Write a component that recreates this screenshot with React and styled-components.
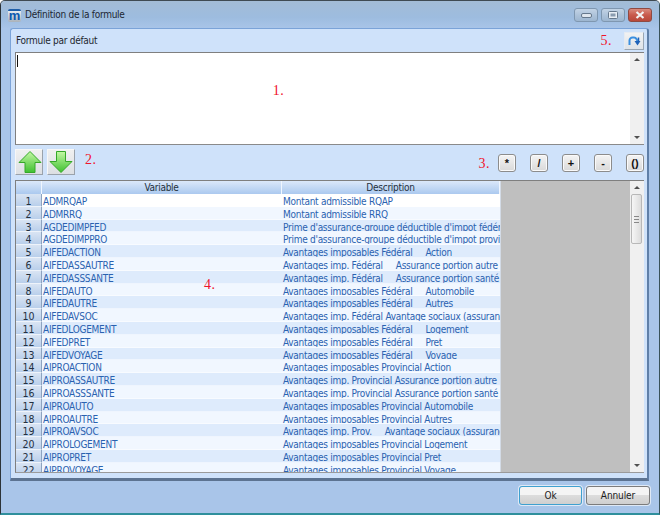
import React from "react";
import styled, { createGlobalStyle } from "styled-components";

const sans = `"DejaVu Sans Condensed", "DejaVu Sans", sans-serif`;

const Global = createGlobalStyle`
  html, body { margin: 0; padding: 0; width: 660px; height: 515px; overflow: hidden; }
  body { font-family: ${sans}; font-size: 10px; letter-spacing: -0.27px; }
`;

const Window = styled.div`
  width: 660px; height: 515px; box-sizing: border-box; display: flex; flex-direction: column;
  background: #a9c5e9; border: 1px solid #3f4a52; border-left-color: #2c3338; border-bottom: 2px solid #2f8f9c; border-right-color:#39525a;
  border-radius: 5px 5px 0 0; overflow: hidden;
`;
const TitleBar = styled.div`
  height: 27px; flex: none; display: flex; align-items: flex-start; padding: 7px 0 0 7px; box-sizing: border-box;
  background: linear-gradient(#a3bcd6, #9dbcdf 60%, #a8c4e8); gap: 4px; color: #1c2733;
`;
const Logo = styled.div`
  width: 13px; height: 13px; margin-top: 1px; border-radius: 2px; display: flex; align-items: center; justify-content: center;
  color: #0a58b0; font: bold 13px/12px "Liberation Sans", sans-serif; letter-spacing: 0; background: linear-gradient(#1f5fa8 0 2px, #e4eaf0 2px, #aab2ba);
`;
const TitleText = styled.div` font-size: 10px; line-height: 14px; flex: 1; `;
const Controls = styled.div` display: flex; gap: 3px; margin: 0 7px 0 0; `;
const Ctl = styled.div`
  width: 24px; height: 14px; box-sizing: border-box; border: 1px solid ${p => p.$red ? "#8f4a42" : "#7f97b0"}; border-radius: 3px; display: flex; align-items: center; justify-content: center;
  background: ${p => p.$red ? "linear-gradient(#d98b7e, #c85a4c 50%, #b8483a)" : "linear-gradient(#c2d3e5, #aec3da 50%, #9db6d0)"};
`;
const Frame = styled.div`
  flex: none; margin: 0 10px 0 9px; height: 453px; box-sizing: border-box; background: #cfe2fa;
  border: 1px solid #7ba3d8; border-right: 2px solid #5f7fa8; border-bottom: 3px solid #5c7391; border-radius: 3px 3px 0 0;
  padding: 3px 3px 0 4px; display: flex; flex-direction: column;
`;
const TopRow = styled.div` display: flex; align-items: flex-start; height: 19px; flex: none; `;
const Caption = styled.div` flex: 1; padding: 2px 0 0 1px; color: #1e2730; font-size: 10px; line-height: 14px; `;
const Mark = styled.span` font: 14px/14px "Liberation Serif", serif; color: #f0142c; letter-spacing: .5px; `;
const Mark5 = styled(Mark)` margin-top: 2px; `;
const RefreshBtn = styled.button`
  width: 20px; height: 18px; margin-left: 12px; padding: 0; border: 1px solid #e6ebf2; border-bottom-color:#9aa6b3; border-right-color:#9aa6b3; background: linear-gradient(#f2f2f2, #dfe3e8);
  display: flex; align-items: center; justify-content: center;
`;
const EditorBox = styled.div`
  flex: none; margin-top: 1px; height: 93px; box-sizing: border-box; display: flex; border: 1px solid #7f7f7f; border-right: none; border-bottom-color: #8a8a8a; background: #fff;
`;
const Editor = styled.div` flex: 1; position: relative; display: flex; align-items: center; justify-content: center; padding: 0 89px 15px 0; `;
const Caret = styled.div` position: absolute; left: 1px; top: 2px; width: 1px; height: 12px; background: #111; `;
const Scroll = styled.div`
  width: 14px; flex: none; background: #f0f0f0; display: flex; flex-direction: column; align-items: center; justify-content: space-between; box-sizing: border-box; padding: 5px 0;
`;
const ArrowTip = styled.div`
  width: 0; height: 0; border-left: 3px solid transparent; border-right: 3px solid transparent;
  ${p => p.$down ? "border-top: 3px solid #505050;" : "border-bottom: 3px solid #505050;"}
`;
const ToolRow = styled.div` flex: none; height: 35px; display: flex; align-items: flex-start; `;
const ArrowBtn = styled.button`
  width: 28px; height: 26px; padding: 0; margin: 4px 4px 0 0; background: linear-gradient(#f0f0f0, #dcdfe3); border: 1px solid #f7f7f7; border-right-color: #9aa2ab; border-bottom-color: #9aa2ab;
  display: flex; align-items: center; justify-content: center;
`;
const Mark2 = styled(Mark)` margin: 8px 0 0 6px; flex: 1; `;
const Mark3 = styled(Mark)` margin: 12px 8px 0 0; `;
const Ops = styled.div` display: flex; gap: 14px; margin-top: 9px; `;
const Op = styled.button`
  width: 18px; height: 18px; padding: 0; border: 1px solid #8c8c8c; border-radius: 3px; background: linear-gradient(#f4f4f4, #d9d9d9);
  font: bold 11px/14px "Liberation Sans", sans-serif; color: #111; box-shadow: inset 0 0 0 1px #fafafa;
`;
const Grid = styled.div`
  flex: none; height: 293px; box-sizing: border-box; position: relative; display: flex; background: #bfbfbf; border: 1px solid #7f7f7f; border-right: none; border-bottom: 1px solid #9a9a9a;
`;
const Mark4 = styled(Mark)` position: absolute; left: 188px; top: 97px; `;
const TableArea = styled.div` flex: none; width: 484px; overflow: hidden; `;
const Filler = styled.div` flex: 1; background: #bfbfbf; border-left: 1px solid #d3dbe6; `;
const GridScroll = styled(Scroll)` position: relative; `;
const Thumb = styled.div`
  position: absolute; left: 1px; top: 13px; width: 11px; height: 50px; box-sizing: border-box; border: 1px solid #b8b8b8; border-radius: 2px; background: linear-gradient(90deg, #f6f6f6, #dcdcdc);
  display: flex; align-items: center; justify-content: center;
`;
const Grip = styled.div` width: 5px; height: 5px; border-top: 1px solid #888; border-bottom: 1px solid #888; position: relative; &::after { content: ""; position: absolute; left: 0; right: 0; top: 2px; height: 1px; background: #888; } `;
const Head = styled.div`
  display: grid; grid-template-columns: 26px 240px 218px; height: 13px; background: linear-gradient(#dbe8fa, #abc9ef);
`;
const HeadCell = styled.div`
  text-align: center; font-size: 10px; line-height: 13px; color: #243040; border-right: 1px solid #f0f6ff; overflow: hidden;
`;
const Row = styled.div`
  display: grid; grid-template-columns: 26px 240px 218px; height: 12.8px; background: ${p => p.$bg};
`;
const Num = styled.div`
  text-align: center; background: linear-gradient(#d9e4f3, #b9cfeb); border-right: 1px solid #8da3c0; border-bottom: 1px solid #eef3fa; box-sizing: border-box; color: #24303f; line-height: 15.4px; font-size: 10.5px; letter-spacing: 0; overflow: hidden;
`;
const Cell = styled.div`
  white-space: pre; overflow: hidden; padding-left: 1px; color: #2a62b0; line-height: 15.6px; font-size: 10px;
  border-bottom: 1px solid rgba(255,255,255,.5); box-sizing: border-box;
`;
const Footer = styled.div` flex: 1; display: flex; justify-content: flex-end; gap: 4px; padding: 5px 9px 0 0; `;
const FootBtn = styled.button`
  width: ${p => p.$w}px; height: 19px; padding: 0; border-radius: 3px; background: linear-gradient(#f4f4f4 45%, #dcdcdc 50%, #cfcfcf);
  border: 1px solid ${p => p.$def ? "#3fa0cf" : "#7c7c7c"}; box-shadow: 0 0 0 1px #dfe9f6; color: #1c1c1c;
  font: 10px ${sans}; letter-spacing: -0.1px;
`;

const rows = [
  ["ADMRQAP", "Montant admissible RQAP"],
  ["ADMRRQ", "Montant admissible RRQ"],
  ["AGDEDIMPFED", "Prime d'assurance-groupe déductible d'impot fédéral"],
  ["AGDEDIMPPRO", "Prime d'assurance-groupe déductible d'impot provincial"],
  ["AIFEDACTION", "Avantages imposables Fédéral     Action"],
  ["AIFEDASSAUTRE", "Avantages imp. Fédéral     Assurance portion autre"],
  ["AIFEDASSSANTE", "Avantages imp. Fédéral     Assurance portion santé"],
  ["AIFEDAUTO", "Avantages imposables Fédéral     Automobile"],
  ["AIFEDAUTRE", "Avantages imposables Fédéral     Autres"],
  ["AIFEDAVSOC", "Avantages imp. Fédéral Avantage sociaux (assurance)"],
  ["AIFEDLOGEMENT", "Avantages imposables Fédéral     Logement"],
  ["AIFEDPRET", "Avantages imposables Fédéral     Pret"],
  ["AIFEDVOYAGE", "Avantages imposables Fédéral     Voyage"],
  ["AIPROACTION", "Avantages imposables Provincial Action"],
  ["AIPROASSAUTRE", "Avantages imp. Provincial Assurance portion autre"],
  ["AIPROASSSANTE", "Avantages imp. Provincial Assurance portion santé"],
  ["AIPROAUTO", "Avantages imposables Provincial Automobile"],
  ["AIPROAUTRE", "Avantages imposables Provincial Autres"],
  ["AIPROAVSOC", "Avantages imp. Prov.     Avantage sociaux (assurance)"],
  ["AIPROLOGEMENT", "Avantages imposables Provincial Logement"],
  ["AIPROPRET", "Avantages imposables Provincial Pret"],
  ["AIPROVOYAGE", "Avantages imposables Provincial Voyage"],
];

const rowBg = i => (i === 0 ? "#ffffff" : i % 2 === 1 ? "#f1f7ff" : "#deebfc");

const GreenArrow = ({ down }) => (
  <svg width="26" height="24" viewBox="0 0 26 24">
    <defs>
      <linearGradient id={down ? "gd" : "gu"} x1="0" y1="0" x2="0" y2="1">
        <stop offset="0" stopColor="#c4f8a4" />
        <stop offset="1" stopColor="#3fc030" />
      </linearGradient>
    </defs>
    <path
      d={down ? "M8.5 1.5h9v10h6.5L13 22.5 2 11.5h6.5z" : "M14 1.5l11 11h-6v10H9v-10H3z"}
      fill={`url(#${down ? "gd" : "gu"})`}
      stroke="#35a828"
      strokeWidth="1"
      strokeLinejoin="round"
    />
  </svg>
);

export default function App() {
  return (
    <Window>
      <Global />
      <TitleBar>
        <Logo>m</Logo>
        <TitleText>Définition de la formule</TitleText>
        <Controls>
          <Ctl>
            <svg width="11" height="5"><rect x="0.5" y="0.5" width="10" height="4" rx="1.5" fill="#dfe6ee" stroke="#66788c" /></svg>
          </Ctl>
          <Ctl>
            <svg width="10" height="8"><rect x="0.5" y="0.5" width="9" height="7" rx="1" fill="#e8eef5" stroke="#66788c" /><rect x="2.5" y="2.5" width="5" height="3" fill="#8a9cb0" /></svg>
          </Ctl>
          <Ctl $red>
            <svg width="10" height="8"><path d="M1.5 1l7 6M8.5 1l-7 6" stroke="#f2f2f2" strokeWidth="2.2" /></svg>
          </Ctl>
        </Controls>
      </TitleBar>
      <Frame>
        <TopRow>
          <Caption>Formule par défaut</Caption>
          <Mark5>5.</Mark5>
          <RefreshBtn>
            <svg width="14" height="12" viewBox="0 0 14 12">
              <path d="M2.5 10V5.5a3 3 0 0 1 3-3h1.5a3 3 0 0 1 2.5 1.5L10.5 6" fill="none" stroke="#3a8fe0" strokeWidth="2" />
              <path d="M7.5 6h6L10.5 10.5z" fill="#1f62b8" />
              <path d="M11.5 2.5v4" stroke="#1f62b8" strokeWidth="1.5" />
            </svg>
          </RefreshBtn>
        </TopRow>
        <EditorBox>
          <Editor>
            <Caret />
            <Mark>1.</Mark>
          </Editor>
          <Scroll>
            <ArrowTip />
            <ArrowTip $down />
          </Scroll>
        </EditorBox>
        <ToolRow>
          <ArrowBtn><GreenArrow /></ArrowBtn>
          <ArrowBtn><GreenArrow down /></ArrowBtn>
          <Mark2>2.</Mark2>
          <Mark3>3.</Mark3>
          <Ops>
            <Op>*</Op>
            <Op>/</Op>
            <Op>+</Op>
            <Op>-</Op>
            <Op>()</Op>
          </Ops>
        </ToolRow>
        <Grid>
          <TableArea>
            <Head>
              <HeadCell />
              <HeadCell>Variable</HeadCell>
              <HeadCell>Description</HeadCell>
            </Head>
            {rows.map(([v, d], i) => (
              <Row key={v} $bg={rowBg(i)}>
                <Num>{i + 1}</Num>
                <Cell>{v}</Cell>
                <Cell>{d}</Cell>
              </Row>
            ))}
          </TableArea>
          <Filler />
          <GridScroll>
            <ArrowTip />
            <Thumb><Grip /></Thumb>
            <ArrowTip $down />
          </GridScroll>
          <Mark4>4.</Mark4>
        </Grid>
      </Frame>
      <Footer>
        <FootBtn $w={63} $def>Ok</FootBtn>
        <FootBtn $w={64}>Annuler</FootBtn>
      </Footer>
    </Window>
  );
}
